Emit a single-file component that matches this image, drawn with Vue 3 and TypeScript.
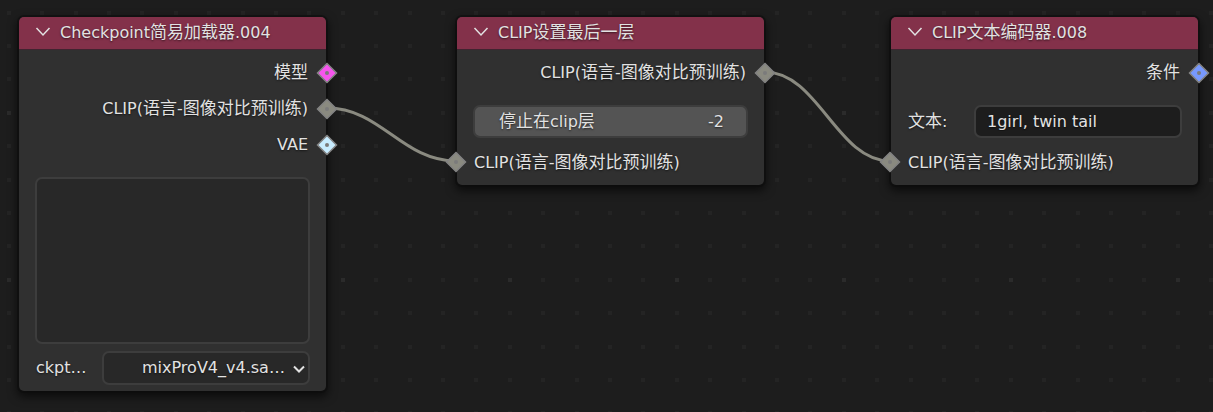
<script setup lang="ts">
import { h } from 'vue'

type SocketKind = 'model' | 'clip' | 'vae' | 'cond'

interface Point {
  x: number
  y: number
}

const links: { from: Point; to: Point }[] = [
  { from: { x: 327, y: 108 }, to: { x: 456, y: 161 } },
  { from: { x: 765, y: 72 }, to: { x: 890, y: 161 } },
]

const fills: Record<SocketKind, string> = {
  model: '#f655ee',
  clip: '#8a8a80',
  vae: '#c8ecff',
  cond: '#7799ff',
}

const steps = [0, 33, 67, 100, 133]

function curve(from: Point, to: Point): string {
  const reach = Math.round((to.x - from.x) * 0.42)
  return `M${from.x} ${from.y} C${from.x + reach} ${from.y} ${to.x - reach} ${to.y} ${to.x} ${to.y}`
}

// Chinese runs are set one size larger than the Latin text around them.
const Mixed = (props: { text: string }) =>
  h(
    'span',
    props.text
      .split(/([\u4e00-\u9fff]+)/)
      .filter(Boolean)
      .map((run) => (/[\u4e00-\u9fff]/.test(run) ? h('span', { class: 'han' }, run) : run)),
  )
Mixed.props = ['text']
</script>

<template>
  <main class="editor">
    <svg class="backdrop" aria-hidden="true">
      <defs>
        <pattern id="grid" x="7" y="111" width="167" height="167" patternUnits="userSpaceOnUse">
          <template v-for="y in steps" :key="y">
            <rect
              v-for="x in steps"
              :key="x"
              :x="x"
              :y="y"
              width="4"
              height="4"
              :fill="x === 0 && y === 0 ? '#2b2b2b' : '#242424'"
            />
          </template>
        </pattern>
      </defs>
      <rect width="100%" height="100%" fill="url(#grid)" />
    </svg>

    <section class="node checkpoint">
      <header class="head">
        <button type="button" class="fold" aria-label="折叠">
          <svg width="16" height="10" viewBox="0 0 16 10"><path d="M1.5 1 L8 8 L14.5 1" /></svg>
        </button>
        <h2><Mixed text="Checkpoint简易加载器.004" /></h2>
      </header>
      <div class="body">
        <div class="row out">
          <Mixed text="模型" />
          <svg class="socket" viewBox="0 0 22 22"><path d="M11 1.5 L20.5 11 L11 20.5 L1.5 11Z" :fill="fills.model" /><circle cx="11" cy="11" r="2" /></svg>
        </div>
        <div class="row out">
          <Mixed text="CLIP(语言-图像对比预训练)" />
          <svg class="socket" viewBox="0 0 22 22"><path d="M11 1.5 L20.5 11 L11 20.5 L1.5 11Z" :fill="fills.clip" /><circle cx="11" cy="11" r="2" /></svg>
        </div>
        <div class="row out">
          <Mixed text="VAE" />
          <svg class="socket" viewBox="0 0 22 22"><path d="M11 1.5 L20.5 11 L11 20.5 L1.5 11Z" :fill="fills.vae" /><circle cx="11" cy="11" r="2" /></svg>
        </div>
        <div class="preview"></div>
        <div class="field picker">
          <label for="ckpt">ckpt…</label>
          <div class="select">
            <select id="ckpt">
              <option>mixProV4_v4.sa…</option>
            </select>
            <svg width="12" height="8" viewBox="0 0 12 8"><path d="M1 1.5 L6 6.5 L11 1.5" /></svg>
          </div>
        </div>
      </div>
    </section>

    <section class="node last-layer">
      <header class="head">
        <button type="button" class="fold" aria-label="折叠">
          <svg width="16" height="10" viewBox="0 0 16 10"><path d="M1.5 1 L8 8 L14.5 1" /></svg>
        </button>
        <h2><Mixed text="CLIP设置最后一层" /></h2>
      </header>
      <div class="body">
        <div class="row out">
          <Mixed text="CLIP(语言-图像对比预训练)" />
          <svg class="socket" viewBox="0 0 22 22"><path d="M11 1.5 L20.5 11 L11 20.5 L1.5 11Z" :fill="fills.clip" /><circle cx="11" cy="11" r="2" /></svg>
        </div>
        <div class="number">
          <label for="stop"><Mixed text="停止在clip层" /></label>
          <input id="stop" type="text" inputmode="numeric" value="-2" />
        </div>
        <div class="row in">
          <svg class="socket" viewBox="0 0 22 22"><path d="M11 1.5 L20.5 11 L11 20.5 L1.5 11Z" :fill="fills.clip" /><circle cx="11" cy="11" r="2" /></svg>
          <Mixed text="CLIP(语言-图像对比预训练)" />
        </div>
      </div>
    </section>

    <section class="node encoder">
      <header class="head">
        <button type="button" class="fold" aria-label="折叠">
          <svg width="16" height="10" viewBox="0 0 16 10"><path d="M1.5 1 L8 8 L14.5 1" /></svg>
        </button>
        <h2><Mixed text="CLIP文本编码器.008" /></h2>
      </header>
      <div class="body">
        <div class="row out">
          <Mixed text="条件" />
          <svg class="socket" viewBox="0 0 22 22"><path d="M11 1.5 L20.5 11 L11 20.5 L1.5 11Z" :fill="fills.cond" /><circle cx="11" cy="11" r="2" /></svg>
        </div>
        <div class="field prompt">
          <label for="prompt"><Mixed text="文本:" /></label>
          <input id="prompt" type="text" value="1girl, twin tail" />
        </div>
        <div class="row in">
          <svg class="socket" viewBox="0 0 22 22"><path d="M11 1.5 L20.5 11 L11 20.5 L1.5 11Z" :fill="fills.clip" /><circle cx="11" cy="11" r="2" /></svg>
          <Mixed text="CLIP(语言-图像对比预训练)" />
        </div>
      </div>
    </section>

    <svg class="links" aria-hidden="true">
      <path v-for="link in links" :key="link.from.x" :d="curve(link.from, link.to)" />
    </svg>
  </main>
</template>

<style>
body {
  margin: 0;
  background: #1d1d1d;
}
</style>

<style scoped>
.editor {
  position: relative;
  min-height: 100vh;
  overflow: hidden;
  background: #1d1d1d;
  color: #e2e2e2;
  font-family: "DejaVu Sans", "Noto Sans CJK SC", sans-serif;
  font-size: 16px;
  line-height: 24px;
  text-shadow: 0 1px 2px rgba(0, 0, 0, 0.6);
}

:deep(.han) {
  font-size: 17px;
}

.backdrop,
.links {
  position: absolute;
  inset: 0;
  width: 100%;
  height: 100%;
  pointer-events: none;
}

.links path {
  fill: none;
  stroke: #8a8a80;
  stroke-width: 3px;
}

.node {
  position: absolute;
  top: 17px;
  box-sizing: border-box;
  width: 307px;
  border-radius: 5px;
  background: #303030;
  box-shadow: 0 0 0 2px rgba(12, 12, 12, 0.5), 0 4px 10px 2px rgba(0, 0, 0, 0.6);
}

.checkpoint {
  left: 19px;
}

.last-layer {
  left: 457px;
}

.encoder {
  left: 891px;
}

.head {
  display: flex;
  align-items: center;
  gap: 9px;
  box-sizing: border-box;
  height: 33px;
  padding: 0 16px 2px;
  border-bottom: 1px solid #402430;
  border-radius: 5px 5px 0 0;
  background: #83314a;
}

h2 {
  margin: 0;
  font: inherit;
}

.fold {
  display: flex;
  padding: 0;
  border: 0;
  background: none;
}

.fold path,
.select path {
  fill: none;
  stroke: #e2e2e2;
  stroke-width: 2px;
}

.fold path {
  stroke-width: 1.5px;
}

.body {
  padding: 10px 16px 6px;
}

.row {
  position: relative;
  display: flex;
  align-items: center;
  height: 25px;
  margin-bottom: 11px;
}

.row.out {
  justify-content: flex-end;
  padding-right: 2px;
}

.row.in {
  height: 24px;
  margin-bottom: 5px;
  padding-left: 1px;
}

.socket {
  position: absolute;
  z-index: 1;
  width: 22px;
  height: 22px;
}

.out .socket {
  right: -28px;
}

.in .socket {
  left: -28px;
}

.socket path {
  stroke: #838383;
  stroke-width: 1.5px;
}

.socket circle {
  fill: #7b7b7b;
}

.preview {
  box-sizing: border-box;
  height: 167px;
  margin: 20px 0 7px;
  border: 2px solid #3d3d3d;
  border-radius: 7px;
  background: #282828;
}

.field {
  display: flex;
  align-items: center;
  justify-content: space-between;
}

.field label {
  padding-left: 1px;
}

.select {
  position: relative;
  width: 208px;
}

.select svg {
  position: absolute;
  right: 5px;
  top: 14px;
  pointer-events: none;
}

select,
input {
  box-sizing: border-box;
  width: 208px;
  height: 33px;
  margin: 0;
  padding: 0 11px;
  border: 2px solid #3d3d3d;
  border-radius: 7px;
  outline: 0;
  appearance: none;
  background: #1d1d1d;
  color: inherit;
  font: inherit;
  text-shadow: inherit;
}

select {
  display: block;
  height: 34px;
  padding: 0 0 0 38px;
  background: #282828;
}

.number {
  display: flex;
  align-items: center;
  box-sizing: border-box;
  height: 33px;
  padding: 0 22px 0 24px;
  border: 2px solid #3d3d3d;
  border-radius: 7px;
  background: #545454;
}

.number input {
  flex: 1;
  width: 0;
  height: 24px;
  padding: 0;
  border: 0;
  background: none;
  text-align: right;
}

.number,
.prompt {
  margin: 20px 0 12px;
}
</style>
